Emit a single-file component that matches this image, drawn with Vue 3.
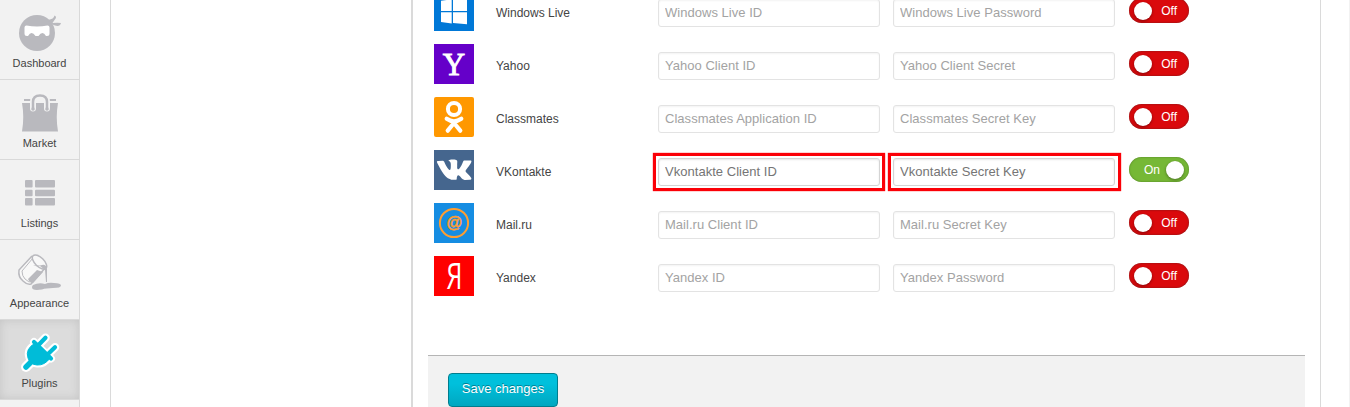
<script setup>
const nav = [
  { id: 'dashboard', label: 'Dashboard' },
  { id: 'market', label: 'Market' },
  { id: 'listings', label: 'Listings' },
  { id: 'appearance', label: 'Appearance' },
  { id: 'plugins', label: 'Plugins', active: true },
]
const listBars = [{ y: 10, h: 7.6 }, { y: 19.8, h: 6.4 }, { y: 28, h: 7.6 }]
const providers = [
  { id: 'windows', name: 'Windows Live', key: 'Windows Live ID', secret: 'Windows Live Password' },
  { id: 'yahoo', name: 'Yahoo', key: 'Yahoo Client ID', secret: 'Yahoo Client Secret' },
  { id: 'classmates', name: 'Classmates', key: 'Classmates Application ID', secret: 'Classmates Secret Key' },
  { id: 'vk', name: 'VKontakte', key: 'Vkontakte Client ID', secret: 'Vkontakte Secret Key', on: true },
  { id: 'mail', name: 'Mail.ru', key: 'Mail.ru Client ID', secret: 'Mail.ru Secret Key' },
  { id: 'yandex', name: 'Yandex', key: 'Yandex ID', secret: 'Yandex Password' },
]
</script>

<template>
  <div class="page">
    <nav class="sidebar">
      <a v-for="n in nav" :key="n.id" class="nav-item" :class="{ active: n.active }">
        <svg class="nav-icon" width="49" height="44" viewBox="0 0 49 44">
          <g v-if="n.id === 'dashboard'" fill="#b9b9be">
            <circle cx="22" cy="23" r="18" />
            <path d="M33 10q6-1 6.500-4.500 3 1 0 4.500l-2 3q5-.5 8.500 0-1 4-6 2.500l-5-2z" />
            <path d="M9.500 17.500q0-2 2-2 10.500 2 21 0 2 0 2 2v6q0 2.500-2.500 2.500h-1q-3.500-6-7.500 0h-3q-4-6-7.500 0h-1q-2.500 0-2.500-2.500z" fill="#fff" />
          </g>
          <g v-else-if="n.id === 'market'" fill="#b9b9be">
            <path d="M7 13h36q-2.500 14 0 28.500H7q2.500-14.500 0-28.500zM9 9h7v2H9zM34 9h7v2h-7z" />
            <path d="M18 18.500V12q0-8 7-8t7 8v6.500" fill="none" stroke="#f3f3f3" stroke-width="6" stroke-linecap="round" />
            <path d="M18 18V12q0-6.500 7-6.500t7 6.500v6" fill="none" stroke="#b9b9be" stroke-width="2.500" />
            <circle cx="18" cy="19" r="1.800" /><circle cx="32" cy="19" r="1.800" />
          </g>
          <g v-else-if="n.id === 'listings'" fill="#b9b9be">
            <g v-for="b in listBars" :key="b.y">
              <rect x="10" :y="b.y" width="7.600" :height="b.h" rx="1" />
              <rect x="20" :y="b.y" width="20" :height="b.h" rx="1" />
            </g>
          </g>
          <g v-else-if="n.id === 'appearance'" fill="#b9b9be">
            <path d="M17 6 4 20q-1 7 4 11 4 4 8 3l15-17" fill="#f8f8f8" stroke="#b9b9be" stroke-width="1.500" />
            <path d="M18 8 7 21q0 5 3 8 4 4 7 3" fill="none" stroke="#b9b9be" />
            <ellipse cx="24.500" cy="12" rx="9" ry="4.500" transform="rotate(44 24.500 12)" fill="#f8f8f8" stroke="#b9b9be" stroke-width="1.500" />
            <path d="M18 15q5 1 9 0 4-1 5 4v13h-1l-1-12-5-4q-4 1-7-1zM22 20l6 2-10 11q-4-1-5-4z" />
            <path d="M18 35q6-3 12-1 4-2 9-1 7 0 7 2.500t-8 2.500q-7 0-11 1.500-10 1.500-10-2 0-2 1-2.500z" />
          </g>
          <g v-else stroke-linecap="round">
            <g v-for="layer in ['halo', 'plug']" :key="layer" :class="layer">
              <path class="cord" d="m11 37 7-7" />
              <path class="body" d="M19.500 13.500Q10 19 13 28q2 6.500 9 7 8 .5 13-7z" />
              <path class="face" d="m19 12 17 16.500" />
              <path class="pin" d="m24 14.500 6.500-6.800M33 24l7-6.800" />
            </g>
          </g>
        </svg>
        <span class="nav-label">{{ n.label }}</span>
      </a>
    </nav>

    <main class="panel">
      <div class="aside"></div>
      <section class="content">
        <ul class="providers">
          <li v-for="p in providers" :key="p.id" class="row" :class="{ enabled: p.on }">
            <svg class="logo" width="40" height="40" viewBox="0 0 40 40">
              <g v-if="p.id === 'windows'">
                <rect width="40" height="40" fill="#0078d7" />
                <path d="M7 9.800 17.700 8.300v11.600H7zM19 8.100 33 6v13.900H19zM7 21.200h10.700v11.300L7 31zM19 21.200h14V33.200l-14-1.300z" fill="#fff" />
              </g>
              <g v-else-if="p.id === 'yahoo'">
                <rect width="40" height="40" fill="#6500c9" />
                <text x="20" y="30.500" class="yahoo-mark">Y</text>
              </g>
              <g v-else-if="p.id === 'classmates'">
                <rect width="40" height="40" rx="2" fill="#ff9800" />
                <g fill="none" stroke="#fff" stroke-linecap="round">
                  <circle cx="20" cy="12" r="6.100" stroke-width="4" />
                  <path d="M12.700 21.800q7.300 5 14.600 0M20 26l-6.300 7.700M20 26l6.300 7.700" stroke-width="4.200" />
                </g>
              </g>
              <g v-else-if="p.id === 'vk'">
                <rect width="40" height="40" fill="#45668e" />
                <path d="M19.500 29.800h2.100s.6-.1.900-.4c.3-.3.300-.9.300-.9s0-2.900 1.300-3.300c1.300-.4 2.900 2.800 4.700 4 1.300.9 2.300.7 2.300.7l4.700-.1s2.400-.2 1.300-2.100c-.1-.2-.7-1.400-3.500-4-3-2.800-2.600-2.300 1-7.100 2.200-2.900 3.100-4.700 2.800-5.500-.2-.8-1.800-.5-1.800-.5l-5.200 0s-.4-.1-.7.100c-.3.200-.4.600-.4.600s-.9 2.200-1.900 4.100c-2.300 3.900-3.200 4.100-3.600 3.800-.9-.6-.6-2.300-.6-3.500 0-3.800.6-5.400-1.100-5.800-.6-.1-1-.2-2.400-.3-1.900 0-3.400 0-4.300.5-.6.300-1.100.9-.8 1 .4.100 1.200.2 1.600.8.600.8.600 2.600.6 2.600s.3 4.900-.8 5.500c-.7.400-1.700-.4-3.900-4.200-1.100-1.900-1.900-4-1.900-4s-.2-.4-.5-.6c-.4-.3-.9-.4-.9-.4L4 11s-.8 0-1 .4c-.2.300 0 .9 0 .9s3.900 9 8.300 13.600c4 4.200 8.200 3.900 8.200 3.900z" fill="#fff" />
              </g>
              <g v-else-if="p.id === 'mail'">
                <rect width="40" height="40" fill="#168de2" />
                <circle cx="20" cy="20" r="14.100" fill="none" stroke="#ff9e31" stroke-width="2" />
                <text x="20.200" y="25" class="mail-mark">@</text>
              </g>
              <g v-else>
                <rect width="40" height="40" fill="#f00" />
                <text transform="translate(20.500 33.300) scale(.7 1)" class="yandex-mark">Я</text>
              </g>
            </svg>
            <span class="name">{{ p.name }}</span>
            <div class="field"><input type="text" :placeholder="p.key"></div>
            <div class="field"><input type="text" :placeholder="p.secret"></div>
            <button class="switch"><span class="state">{{ p.on ? 'On' : 'Off' }}</span><i class="knob"></i></button>
          </li>
        </ul>
        <footer class="footer"><button class="save">Save changes</button></footer>
      </section>
    </main>
  </div>
</template>

<style>
body { margin: 0; overflow: hidden; background: #fff; }
</style>

<style scoped>
.page { display: flex; box-sizing: border-box; width: 1350px; height: 407px; overflow: hidden; border-right: 1px solid #f2f2f2; font: 12px "Liberation Sans", Arial, sans-serif; color: #444; }
.sidebar { box-sizing: border-box; width: 80px; flex: none; background: #f2f2f2; border-right: 1px solid #d9d9d9; }
.nav-item { box-sizing: border-box; height: 80px; padding-top: 10px; display: flex; flex-direction: column; align-items: center; border-bottom: 1px solid #d9d9d9; font-size: 11px; }
.nav-item.active { background: #dcdcdc; box-shadow: inset 0 0 10px #c4c4c4; }
.nav-icon { display: block; flex: none; }
.nav-label { line-height: 14px; margin-top: 2px; }
.halo { fill: #fff; stroke: #fff; }
.halo .cord { stroke-width: 10; }
.halo .body { stroke-width: 5; }
.halo .face { stroke-width: 8; }
.halo .pin { stroke-width: 8.500; }
.plug { fill: #00bcd8; stroke: #00bcd8; }
.plug .cord { stroke-width: 5.500; }
.plug .body { stroke-width: 1; }
.plug .face, .plug .pin { stroke-width: 4.200; }
.panel { display: flex; box-sizing: border-box; width: 1211px; margin-left: 30px; border: solid #dadada; border-width: 0 1px; }
.aside { width: 300px; flex: none; border-right: 2px solid #dadada; }
.content { flex: 1; padding: 0 15px; }
.providers { list-style: none; margin: -9px 0 0; padding: 0 0 0 6px; height: 364px; }
.row { display: flex; align-items: flex-start; height: 53px; }
.logo { display: block; flex: none; overflow: visible; }
.name { width: 162px; padding-left: 22px; padding-top: 14px; line-height: 16px; }
.field { position: relative; width: 222px; margin: 8px 13px 0 0; }
input { display: block; box-sizing: border-box; width: 222px; height: 28px; margin: 0; padding: 0 6px 2px; border: 1px solid #e3e3e3; border-radius: 3px; background: #fff; box-shadow: inset 0 1px 2px #f3f3f3; font: 13px "Liberation Sans", Arial, sans-serif; letter-spacing: .03px; }
input::placeholder { color: #a3a3a3; opacity: 1; }
.enabled input { border-color: #d4d4d4; box-shadow: inset 0 1px 2px #e7e7e7; }
.enabled input::placeholder { color: #757575; }
.enabled .field::after { content: ""; position: absolute; inset: -5px; border: 3px solid #fb0007; box-shadow: 0 0 1px #fb0007; }
.enabled .field + .field::after { right: -6px; }
.switch { display: flex; align-items: center; justify-content: space-between; flex-direction: row-reverse; box-sizing: border-box; width: 60px; height: 25px; margin: 7px 0 0 1px; padding: 0 12px 0 5px; border: 0; border-radius: 13px; color: #fff; background: #da090c; box-shadow: inset 0 0 2px #672020; font: 12px "Liberation Sans", Arial, sans-serif; }
.enabled .switch { flex-direction: row; padding: 0 5px 0 15px; background: #76b836; box-shadow: inset 0 0 2px #4b7522; }
.knob { width: 18px; height: 18px; border-radius: 50%; background: #fff; box-shadow: 0 1px 3px #0006; }
.footer { box-sizing: border-box; height: 70px; padding: 17px 20px; border-top: 1px solid #b5b5b5; background: #f2f2f2; }
.save { display: block; box-sizing: border-box; width: 110px; height: 34px; padding: 0 0 4px; border: 1px solid #007d8d; border-radius: 4px; background: linear-gradient(#00c0dc 30%, #00a7c0); color: #fff; text-shadow: 0 -1px 0 #007d91; font: 13px "Liberation Sans", Arial, sans-serif; }
.yahoo-mark, .mail-mark, .yandex-mark { fill: #fff; text-anchor: middle; }
.yahoo-mark { font: 31px "Liberation Serif", serif; stroke: #fff; stroke-width: .9px; }
.mail-mark { fill: #ff9e31; stroke: #ff9e31; stroke-width: .5px; font: bold 16px "Liberation Sans", sans-serif; }
.yandex-mark { font: 36px/1 "Open Sans", sans-serif; }
</style>
